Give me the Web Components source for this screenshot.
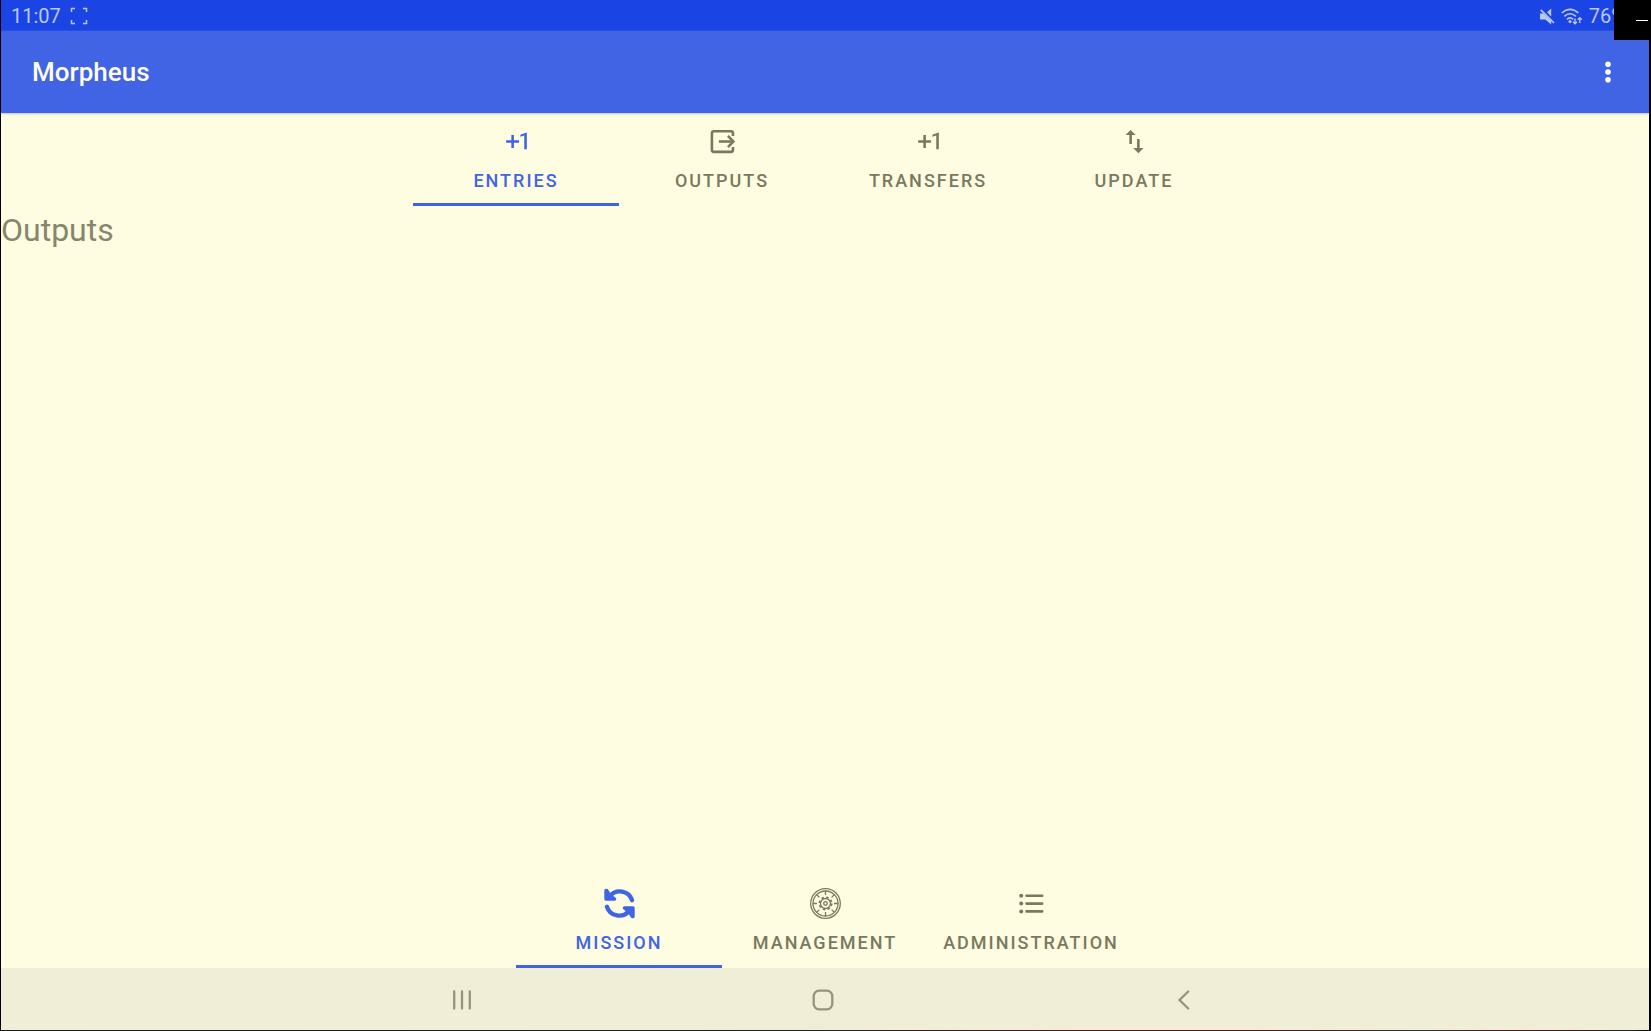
<!DOCTYPE html>
<html lang="en">
<head>
<meta charset="utf-8">
<meta name="viewport" content="width=device-width, initial-scale=1">
<title>Morpheus</title>
<style>
  :root {
    --cream: #fefde2;
    --blue: #4064e4;
    --blue-dark: #1b44e5;
    --muted: #79795f;
    --nav: #f0eed6;
  }
  body { margin: 0; background: #000; font-family: Roboto, "Liberation Sans", sans-serif; }
</style>
</head>
<body>
<morpheus-app></morpheus-app>
<script>
const ICONS = {
  plus: `<svg viewBox="0 0 24 24"><path fill="currentColor" d="M10 7H8v4H4v2h4v4h2v-4h4v-2h-4V7zm10 11h-2V7.38L15 8.4V6.7L19.7 5h.3v13z"/></svg>`,
  exit: `<svg viewBox="0 0 24 24" fill="none" stroke="currentColor" stroke-width="2" stroke-linejoin="round"><path d="M20.1 7.8V5.6q0-1.6-1.6-1.6H5.4Q3.8 4 3.8 5.6v12.8q0 1.6 1.6 1.6h13.1q1.6 0 1.6-1.6v-2.2"/><path d="M9.2 12H20"/><path stroke-linejoin="miter" d="M16.2 7.7 20.4 12l-4.2 4.3"/></svg>`,
  swap: `<svg viewBox="0 0 24 24"><path fill="currentColor" d="M9 3L5 6.99h3V14h2V6.99h3L9 3zm7 14.01V10h-2v7.01h-3L15 21l4-3.99h-3z"/></svg>`,
  sync: `<svg viewBox="0 0 31 31"><g id="half"><path fill="none" stroke="currentColor" stroke-width="4.4" stroke-linecap="round" d="M5.8 8.4A12.7 12.7 0 0 1 28 12.2"/><path fill="currentColor" stroke="currentColor" stroke-width="3.4" stroke-linejoin="round" d="M2 2.4 2.6 2.4 5.6 7.2 10.6 11H2z"/></g><use href="#half" transform="rotate(180 15.5 15.5)"/></svg>`,
  wheel: `<svg viewBox="0 0 31 31" fill="none" stroke="currentColor"><circle cx="15.5" cy="15.5" r="14.8" stroke-width="1.3"/><circle cx="15.5" cy="15.5" r="12.5" stroke-width="1.3"/><path stroke-width="1.3" d="M15.5 3v4M15.5 24v4M3 15.5h4M24 15.5h4M6.7 6.7l2.7 2.7M21.6 21.6l2.7 2.7M6.7 24.3l2.7-2.7M21.6 9.4l2.7-2.7"/><circle cx="15.5" cy="15.5" r="5" stroke-width="1.3"/><circle cx="15.5" cy="15.5" r="6.2" stroke-width="1.6" stroke-dasharray="2.5 2.37"/><circle cx="15.5" cy="15.5" r="1.8" stroke-width="1.3"/></svg>`,
  list: `<svg viewBox="0 0 31 31"><g fill="currentColor"><circle cx="5.2" cy="7.8" r="2"/><circle cx="5.2" cy="15.6" r="2"/><circle cx="5.2" cy="23.4" r="2"/></g><path stroke="currentColor" stroke-width="2.6" stroke-linecap="round" d="M10.5 7.8h15.7M10.5 15.6h15.7M10.5 23.4h15.7"/></svg>`
};

class StatusBar extends HTMLElement {
  constructor() {
    super();
    this.attachShadow({ mode: "open" }).innerHTML = `
      <style>
        :host { display: flex; justify-content: space-between; box-sizing: border-box; height: 31px; padding: 1px 23px 0 10px; background: var(--blue-dark); color: #bcc8ee; font-size: 20px; line-height: 30px; }
        div { display: flex; align-items: center; gap: 9px; white-space: nowrap; }
        .right { gap: 6px; }
        svg { display: block; }
      </style>
      <div><span>11:07</span>
        <svg width="18" height="18" viewBox="0 0 18 18" fill="none" stroke="currentColor" stroke-width="1.5"><path d="M1.5 5V1.5H5M13 1.5h3.5V5M16.5 13v3.5H13M5 16.5H1.5V13"/></svg>
      </div>
      <div class="right">
        <svg width="15" height="17" viewBox="0 0 15 17"><path fill="currentColor" d="M0 5.4h3.3l7.9 7.7v3.3L5.3 11.4H0zM11.2.5v8L7 4.2z"/><path stroke="currentColor" stroke-width="1.7" d="M.8 1.8 14 15"/></svg>
        <svg width="22" height="17" viewBox="0 0 22 17" fill="none" stroke="currentColor" stroke-width="1.6"><path d="M.8 5Q9 -2.2 17.4 5M3.4 8.3Q9 3.2 14.8 8.3M6 11.3Q9 8.6 12.2 11.3"/><circle cx="9" cy="13.4" r="1.5" fill="currentColor" stroke="none"/><path stroke-width="1.3" d="M14 10.5V16M12 13.7l2 2.2 2-2.2M18.8 15V9.5M16.8 11.8l2-2.2 2 2.2"/></svg>
        <span>76%</span>
      </div>`;
  }
}

class AppBar extends HTMLElement {
  constructor() {
    super();
    this.attachShadow({ mode: "open" }).innerHTML = `
      <style>
        :host { display: flex; align-items: center; justify-content: space-between; box-sizing: border-box; height: 82px; padding: 0 20px 0 31px; background: var(--blue); color: #fffdea; box-shadow: 0 1px 2px #b9c4df; }
        h1 { margin: 0; font-size: 26px; line-height: 32px; font-weight: 500; }
        button { display: grid; place-items: center; width: 42px; height: 48px; padding: 0; border: 0; background: none; color: inherit; }
      </style>
      <h1><slot></slot></h1>
      <button aria-label="More options"><svg width="6" height="24" viewBox="0 0 6 24" fill="currentColor"><circle cx="3" cy="4.3" r="2.8"/><circle cx="3" cy="12" r="2.8"/><circle cx="3" cy="19.7" r="2.8"/></svg></button>`;
  }
}

class TabItem extends HTMLElement {
  connectedCallback() {
    if (this.shadowRoot) return;
    const on = this.hasAttribute("selected");
    this.attachShadow({ mode: "open" }).innerHTML = `
      <style>
        :host { display: block; flex: 0 1 206px; color: var(--muted); }
        :host([selected]) { color: var(--blue); }
        button { display: flex; flex-direction: column; align-items: center; gap: 12px; box-sizing: border-box; width: 100%; height: 93px; padding: 13px 0 0; border: 0; border-bottom: 3px solid transparent; background: none; color: inherit; font: 500 18px/24px Roboto, "Liberation Sans", sans-serif; letter-spacing: 2px; text-transform: uppercase; white-space: nowrap; }
        :host([selected]) button { border-bottom-color: currentColor; }
        svg { display: block; width: 31px; height: 31px; }
      </style>
      <button role="tab" aria-selected="${on}">${ICONS[this.getAttribute("icon")]}<span><slot></slot></span></button>`;
  }
}

class TabBar extends HTMLElement {
  constructor() {
    super();
    this.attachShadow({ mode: "open" }).innerHTML = `
      <style>:host { display: flex; justify-content: center; }</style><slot></slot>`;
  }
  connectedCallback() { this.setAttribute("role", "tablist"); }
}

class SystemNav extends HTMLElement {
  constructor() {
    super();
    this.attachShadow({ mode: "open" }).innerHTML = `
      <style>
        :host { display: flex; justify-content: center; height: 62px; padding-right: 4px; background: var(--nav); color: #95947d; }
        button { display: grid; place-items: center; flex: 0 1 361px; padding: 2px 0 0; border: 0; background: none; color: inherit; }
        svg { display: block; fill: none; stroke: currentColor; stroke-width: 2.3; stroke-linecap: round; }
      </style>
      <button aria-label="Recent apps"><svg width="22" height="22" viewBox="0 0 22 22"><path d="M3.2 2.5v17M11 2.5v17M18.8 2.5v17"/></svg></button>
      <button aria-label="Home"><svg width="22" height="22" viewBox="0 0 22 22"><rect x="1.7" y="1.7" width="18.6" height="18.6" rx="5.5"/></svg></button>
      <button aria-label="Back"><svg width="22" height="22" viewBox="0 0 22 22"><path d="M15.2 2.5 6.5 11l8.7 8.5"/></svg></button>`;
  }
}

class WindowMinimize extends HTMLElement {
  constructor() {
    super();
    this.attachShadow({ mode: "open" }).innerHTML = `
      <style>
        :host { display: block; position: absolute; top: 0; right: 0; z-index: 2; }
        button { display: flex; align-items: center; justify-content: flex-end; width: 37px; height: 40px; padding: 0 3px 0 0; border: 0; background: #000; }
        i { display: block; width: 12px; height: 1px; background: #fff; }
      </style>
      <button aria-label="Minimize"><i></i></button>`;
  }
}

class MorpheusApp extends HTMLElement {
  constructor() {
    super();
    this.attachShadow({ mode: "open" }).innerHTML = `
      <style>
        :host { display: flex; flex-direction: column; box-sizing: border-box; min-height: 100vh; padding: 0 2px 1px 1px; background: linear-gradient(90deg, #000 1px, #1a1a1a 2px, #222 50%, #4a1c1c 65%, #4a1c1c 76%, #333 86%, #4a1c1c 92%, #222 99%, #000 100%); position: relative; }
        .screen { display: flex; flex-direction: column; flex: 1; overflow: hidden; background: var(--cream); }
        main { flex: 1; padding: 4px 0 0; color: #86866c; }
        p { margin: 0; font-size: 32px; line-height: 40px; }
      </style>
      <div class="screen">
        <status-bar></status-bar>
        <app-bar>Morpheus</app-bar>
        <tab-bar>
          <tab-item icon="plus" selected>Entries</tab-item>
          <tab-item icon="exit">Outputs</tab-item>
          <tab-item icon="plus">Transfers</tab-item>
          <tab-item icon="swap">Update</tab-item>
        </tab-bar>
        <main><p>Outputs</p></main>
        <tab-bar>
          <tab-item icon="sync" selected>Mission</tab-item>
          <tab-item icon="wheel">Management</tab-item>
          <tab-item icon="list">Administration</tab-item>
        </tab-bar>
        <system-nav></system-nav>
      </div>
      <window-minimize></window-minimize>`;
  }
}

customElements.define("status-bar", StatusBar);
customElements.define("app-bar", AppBar);
customElements.define("tab-item", TabItem);
customElements.define("tab-bar", TabBar);
customElements.define("system-nav", SystemNav);
customElements.define("window-minimize", WindowMinimize);
customElements.define("morpheus-app", MorpheusApp);
</script>
</body>
</html>
